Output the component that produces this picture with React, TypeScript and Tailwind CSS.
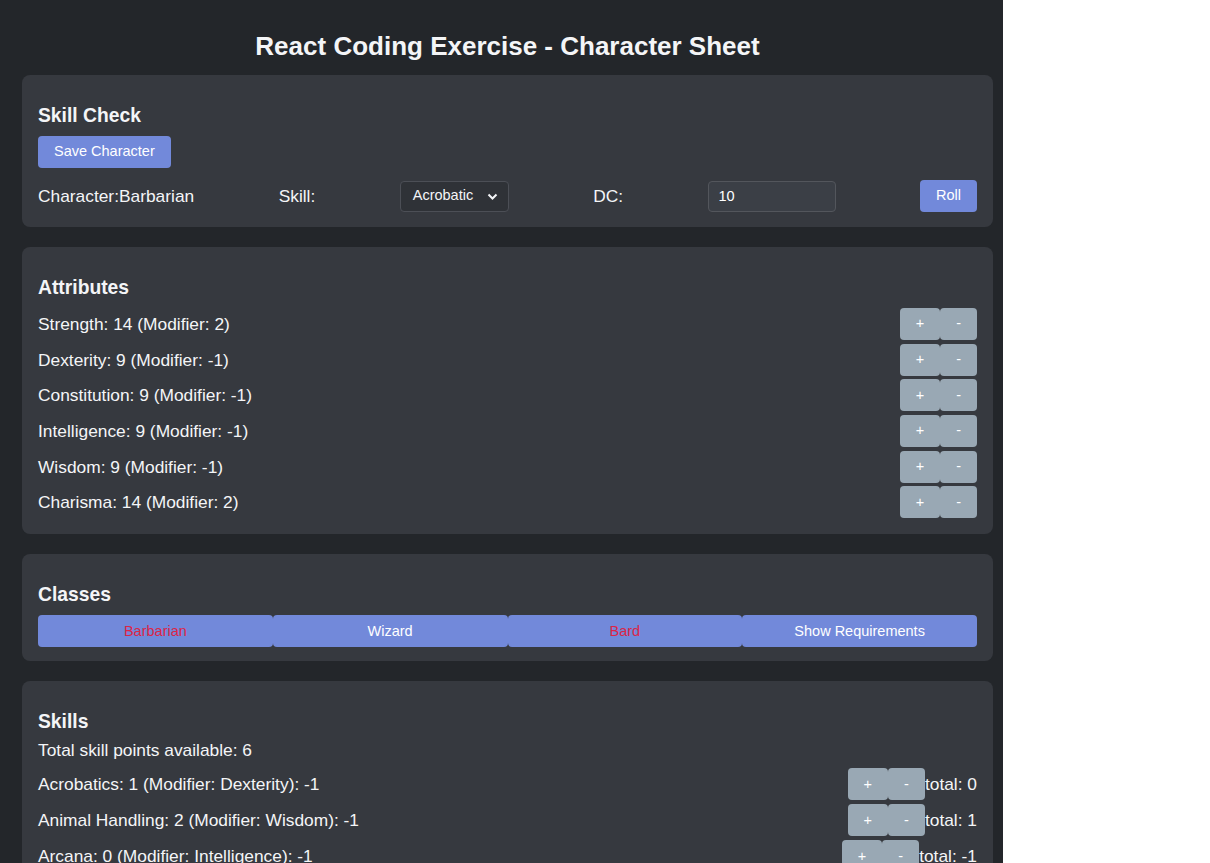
import React, { useState } from 'react';

type Attr = { name: string; value: number };
type Skill = { name: string; points: number; attr: string; mod: number };

const attributes: Attr[] = [
  { name: 'Strength', value: 14 },
  { name: 'Dexterity', value: 9 },
  { name: 'Constitution', value: 9 },
  { name: 'Intelligence', value: 9 },
  { name: 'Wisdom', value: 9 },
  { name: 'Charisma', value: 14 },
];

const skills: Skill[] = [
  { name: 'Acrobatics', points: 1, attr: 'Dexterity', mod: -1 },
  { name: 'Animal Handling', points: 2, attr: 'Wisdom', mod: -1 },
  { name: 'Arcana', points: 0, attr: 'Intelligence', mod: -1 },
  { name: 'Athletics', points: 0, attr: 'Strength', mod: 2 },
  { name: 'Deception', points: 0, attr: 'Charisma', mod: 2 },
  { name: 'History', points: 0, attr: 'Intelligence', mod: -1 },
];

const classes = [
  { name: 'Barbarian', met: false },
  { name: 'Wizard', met: true },
  { name: 'Bard', met: false },
];

const modifier = (v: number) => Math.floor((v - 10) / 2);

const StepButtons: React.FC = () => (
  <div className="flex">
    <button className="h-8 px-4 rounded-[4px] bg-[#99a8b4] text-white text-[14.5px]">+</button>
    <button className="h-8 px-4 rounded-[4px] bg-[#99a8b4] text-white text-[14.5px]">-</button>
  </div>
);

const Card: React.FC<{ title: string; children: React.ReactNode; pb?: string }> = ({ title, children, pb = 'pb-4' }) => (
  <section className={`rounded-lg bg-[#36393f] px-4 pt-[31px] ${pb} mb-5`}>
    <h3 className="text-[19.3px] font-bold leading-5">{title}</h3>
    {children}
  </section>
);

export default function App() {
  const [dc, setDc] = useState('10');

  return (
    <div className="w-[1003px] min-h-[863px] bg-[#23262a] pl-[22px] pr-[10px] pt-[31px] pb-5 text-[17.35px] text-[#f4f5f7] font-['Liberation_Sans',Arial,sans-serif]">
      <h1 className="text-center text-[26px] font-bold leading-[30px] mb-[14px]">
        React Coding Exercise - Character Sheet
      </h1>

      <Card title="Skill Check" pb="pb-[15px]">
        <button className="mt-[10px] h-8 px-4 rounded-[4px] bg-[#7289da] text-white text-[14.5px]">
          Save Character
        </button>
        <div className="mt-3 flex items-center justify-between">
          <span>Character:Barbarian</span>
          <span>Skill:</span>
          <div className="relative w-[109px] h-[31px] rounded-[4px] border border-[#4c4f56] bg-[#2f3237] flex items-center pl-3 text-[14.5px]">
            <span>Acrobatic</span>
            <svg className="absolute right-[10px] top-[11px]" width="11" height="8" viewBox="0 0 11 8">
              <path d="M1.5 1.5 L5.5 5.5 L9.5 1.5" fill="none" stroke="#f4f5f7" strokeWidth="2" />
            </svg>
          </div>
          <span>DC:</span>
          <input
            value={dc}
            onChange={e => setDc(e.target.value)}
            className="w-[128px] h-[31px] rounded-[4px] border border-[#53565c] bg-[#3b3f46] px-[10px] text-[14.5px] text-white outline-none"
          />
          <button className="h-8 px-4 rounded-[4px] bg-[#7289da] text-white text-[14.5px]">Roll</button>
        </div>
      </Card>

      <Card title="Attributes">
        <div className="mt-[10px] flex flex-col gap-[3.7px]">
          {attributes.map(a => (
            <div key={a.name} className="flex items-center justify-between">
              <span>
                {a.name}: {a.value} (Modifier: {modifier(a.value)})
              </span>
              <StepButtons />
            </div>
          ))}
        </div>
      </Card>

      <Card title="Classes" pb="pb-[14px]">
        <div className="mt-[10px] flex">
          {classes.map(c => (
            <button
              key={c.name}
              className={`flex-1 h-8 rounded-[4px] bg-[#7289da] text-[14.5px] ${c.met ? 'text-white' : 'text-[#dc2546]'}`}
            >
              {c.name}
            </button>
          ))}
          <button className="flex-1 h-8 rounded-[4px] bg-[#7289da] text-white text-[14.5px]">Show Requirements</button>
        </div>
      </Card>

      <Card title="Skills">
        <div className="mt-2 leading-5">Total skill points available: 6</div>
        <div className="mt-2 flex flex-col gap-1">
          {skills.map(s => (
            <div key={s.name} className="flex items-center justify-between">
              <span>
                {s.name}: {s.points} (Modifier: {s.attr}): {s.mod}
              </span>
              <div className="flex items-center">
                <StepButtons />
                <span>total: {s.points + s.mod}</span>
              </div>
            </div>
          ))}
        </div>
      </Card>
    </div>
  );
}
